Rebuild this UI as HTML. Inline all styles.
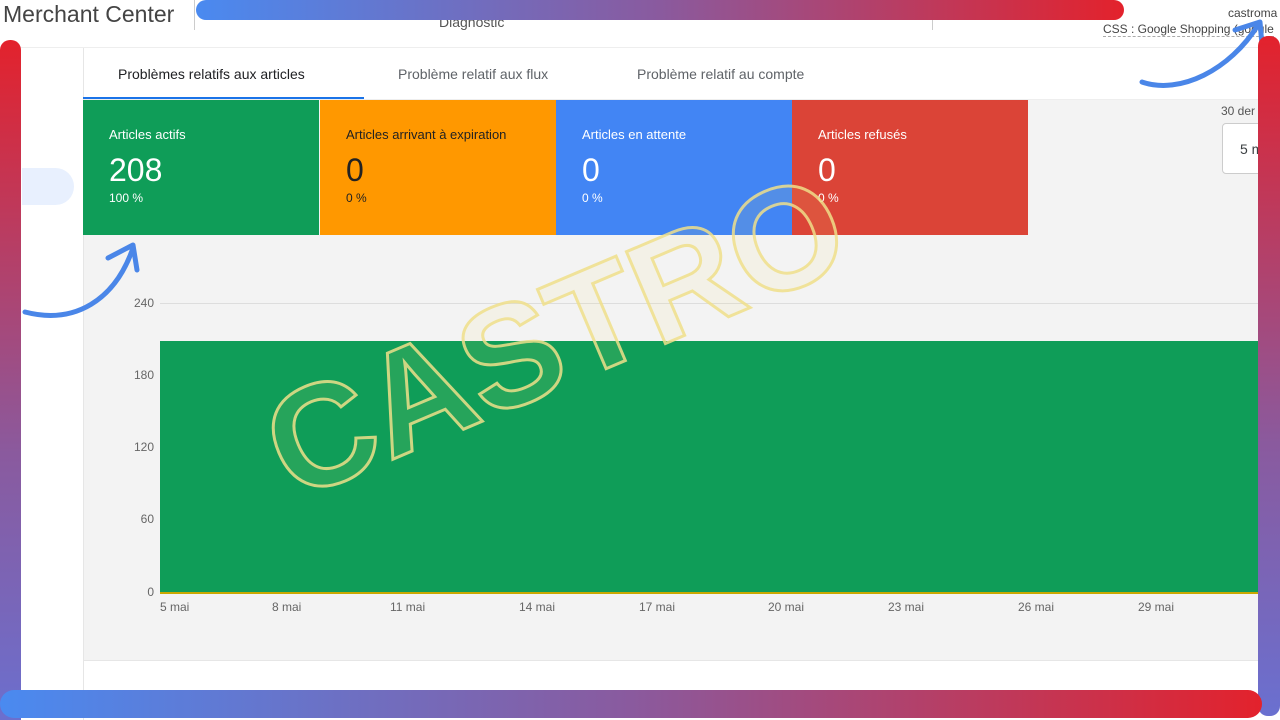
<!DOCTYPE html>
<html><head><meta charset="utf-8"><style>
*{margin:0;padding:0;box-sizing:border-box}
body{width:1280px;height:720px;overflow:hidden;background:#fff;font-family:"Liberation Sans",sans-serif;position:relative;color:#3c4043}
.abs{position:absolute}
.card{position:absolute;top:100px;height:135px;width:236px;color:#fff;padding:27px 0 0 26px}
.card .t{font-size:13px}
.card .n{font-size:32px;margin-top:12px;line-height:32px}
.card .p{font-size:12px;margin-top:5px}
.yl{position:absolute;left:118px;font-size:12px;color:#666;text-align:right;width:36px}
.gl{position:absolute;left:160px;width:1100px;height:1px;background:#ddd}
.xl{position:absolute;top:600px;font-size:12px;color:#666}
</style></head><body>
<div class="abs" style="left:3px;top:1px;font-size:23px;color:#444">Merchant Center</div>
<div class="abs" style="left:194px;top:0;width:1px;height:30px;background:#ccc"></div>
<div class="abs" style="left:439px;top:14px;font-size:14px;color:#555">Diagnostic</div>
<div class="abs" style="left:932px;top:0;width:1px;height:30px;background:#ccc"></div>
<div class="abs" style="left:1228px;top:6px;font-size:12px;color:#444">castroma</div>
<div class="abs" style="left:1103px;top:22px;font-size:12px;color:#444;white-space:nowrap;border-bottom:1px dashed #aaa">CSS : Google Shopping (google</div>
<div class="abs" style="left:0;top:47px;width:1280px;height:1px;background:#eee"></div>
<div class="abs" style="left:83px;top:48px;width:1px;height:672px;background:#e6e6e6"></div>
<div class="abs" style="left:22px;top:168px;width:52px;height:37px;background:#e8f0fe;border-radius:0 19px 19px 0"></div>
<div class="abs" style="left:118px;top:66px;font-size:14px;color:#202124">Problèmes relatifs aux articles</div>
<div class="abs" style="left:398px;top:66px;font-size:14px;color:#5f6368">Problème relatif aux flux</div>
<div class="abs" style="left:637px;top:66px;font-size:14px;color:#5f6368">Problème relatif au compte</div>
<div class="abs" style="left:83px;top:97px;width:281px;height:2px;background:#1a73e8"></div>
<div class="abs" style="left:84px;top:99px;width:1180px;height:1px;background:#eee"></div>
<div class="abs" style="left:84px;top:100px;width:1180px;height:560px;background:#f3f3f3"></div>
<div class="card" style="left:83px;background:#0f9d58"><div class="t">Articles actifs</div><div class="n">208</div><div class="p">100 %</div></div>
<div class="card" style="left:320px;background:#ff9800;color:#222"><div class="t">Articles arrivant à expiration</div><div class="n">0</div><div class="p">0 %</div></div>
<div class="card" style="left:556px;background:#4285f4"><div class="t">Articles en attente</div><div class="n">0</div><div class="p">0 %</div></div>
<div class="card" style="left:792px;background:#db4437"><div class="t">Articles refusés</div><div class="n">0</div><div class="p">0 %</div></div>
<div class="abs" style="left:1221px;top:104px;font-size:12px;color:#555">30 der</div>
<div class="abs" style="left:1222px;top:123px;width:60px;height:51px;border:1px solid #ccc;border-radius:4px;background:#fff;font-size:14px;padding:17px 0 0 17px">5 m</div>
<div class="gl" style="top:303px"></div><div class="gl" style="top:375px"></div><div class="gl" style="top:447px"></div><div class="gl" style="top:519px"></div>
<div class="yl" style="top:296px">240</div><div class="yl" style="top:368px">180</div><div class="yl" style="top:440px">120</div><div class="yl" style="top:512px">60</div><div class="yl" style="top:585px">0</div>
<div class="abs" style="left:160px;top:341px;width:1100px;height:252px;background:#0f9d58"></div>
<div class="abs" style="left:160px;top:592px;width:1100px;height:2px;background:#c9a800"></div>
<div class="xl" style="left:160px">5 mai</div><div class="xl" style="left:272px">8 mai</div><div class="xl" style="left:390px">11 mai</div><div class="xl" style="left:519px">14 mai</div><div class="xl" style="left:639px">17 mai</div><div class="xl" style="left:768px">20 mai</div><div class="xl" style="left:888px">23 mai</div><div class="xl" style="left:1018px">26 mai</div><div class="xl" style="left:1138px">29 mai</div>
<div class="abs" style="left:84px;top:660px;width:1180px;height:1px;background:#e6e6e6"></div>
<svg class="abs" style="left:0;top:0" width="1280" height="720">
<text x="555" y="386" text-anchor="middle" transform="rotate(-23 555 335)" font-family="Liberation Sans" font-weight="bold" font-size="145" fill="rgba(240,225,120,0.12)" stroke="#f0e08a" stroke-width="3" opacity="0.85">CASTRO</text>
<path d="M25 312 C75 325 115 300 133 248" stroke="#4a86e8" stroke-width="5" fill="none" stroke-linecap="round"/>
<path d="M108 258 L133 245 L137 270" stroke="#4a86e8" stroke-width="5" fill="none" stroke-linecap="round" stroke-linejoin="round"/>
<path d="M1142 82 C1180 95 1230 70 1258 25" stroke="#4a86e8" stroke-width="5" fill="none" stroke-linecap="round"/>
<path d="M1235 30 L1260 22 L1262 45" stroke="#4a86e8" stroke-width="5" fill="none" stroke-linecap="round" stroke-linejoin="round"/>
<defs>
<linearGradient id="h" x1="0" x2="1"><stop offset="0" stop-color="#4a8af0"/><stop offset="0.5" stop-color="#8a5a9e"/><stop offset="1" stop-color="#e3222c"/></linearGradient>
<linearGradient id="v" x1="0" y1="0" x2="0" y2="1"><stop offset="0" stop-color="#e3222c"/><stop offset="0.6" stop-color="#8a5a9e"/><stop offset="1" stop-color="#6a70d0"/></linearGradient>
</defs>
<rect x="196" y="0" width="928" height="20" rx="10" fill="url(#h)"/>
<rect x="0" y="40" width="21" height="690" rx="10" fill="url(#v)"/>
<rect x="1258" y="36" width="22" height="680" rx="10" fill="url(#v)"/>
<rect x="0" y="690" width="1262" height="28" rx="14" fill="url(#h)"/>
</svg>
</body></html>
